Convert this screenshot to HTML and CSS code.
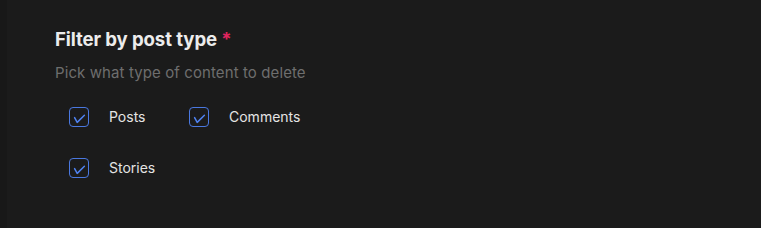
FILE: index.html
```html
<!DOCTYPE html>
<html>
<head>
<meta charset="utf-8">
<link rel="stylesheet" href="styles.css">
</head>
<body>
<div class="page">
  <div class="side"></div>
  <main class="main">
    <fieldset class="group">
      <h2 class="title">Filter by post type <span class="req">*</span></h2>
      <p class="hint">Pick what type of content to delete</p>
      <div class="options">
        <label class="opt"><span class="box"><svg viewBox="0 0 17 17" width="17" height="17"><path d="M3.6 8.6 L6.2 13.4 L13.4 6.3" fill="none" stroke="#4f82f0" stroke-width="1.5" stroke-linecap="round" stroke-linejoin="round"/></svg></span><span class="lbl">Posts</span></label>
        <label class="opt"><span class="box"><svg viewBox="0 0 17 17" width="17" height="17"><path d="M3.6 8.6 L6.2 13.4 L13.4 6.3" fill="none" stroke="#4f82f0" stroke-width="1.5" stroke-linecap="round" stroke-linejoin="round"/></svg></span><span class="lbl">Comments</span></label>
        <label class="opt"><span class="box"><svg viewBox="0 0 17 17" width="17" height="17"><path d="M3.6 8.6 L6.2 13.4 L13.4 6.3" fill="none" stroke="#4f82f0" stroke-width="1.5" stroke-linecap="round" stroke-linejoin="round"/></svg></span><span class="lbl">Stories</span></label>
      </div>
    </fieldset>
  </main>
</div>
</body>
</html>
```

FILE: styles.css
```css
html, body {
  margin: 0;
  padding: 0;
  background: #1b1b1b;
}
body {
  font-family: Inter, "Noto Sans", sans-serif;
  width: 761px;
  height: 228px;
  overflow: hidden;
}
.page {
  display: flex;
  height: 228px;
}
.side {
  width: 7px;
  background: #181818;
  flex: none;
}
.main {
  flex: 1;
  background: #1b1b1b;
  padding: 26px 0 0 48px;
}
.group {
  border: 0;
  margin: 0;
  padding: 0;
}
.title {
  margin: 0;
  font-size: 18.6px;
  font-weight: 700;
  line-height: 26px;
  color: #ececec;
  letter-spacing: -0.1px;
}
.req {
  color: #e0245e;
}
.hint {
  margin: 11px 0 0;
  font-size: 15px;
  line-height: 20px;
  color: #6e6e6e;
  letter-spacing: 0.1px;
}
.options {
  display: grid;
  grid-template-columns: 120px auto;
  justify-content: start;
  row-gap: 31px;
  margin: 24px 0 0 14px;
}
.opt {
  display: flex;
  align-items: center;
  gap: 20px;
  height: 20px;
}
.box {
  width: 20px;
  height: 20px;
  box-sizing: border-box;
  border: 1.5px solid #4a78e0;
  border-radius: 4px;
  display: flex;
  align-items: center;
  justify-content: center;
  flex: none;
}
.box svg {
  width: 17px;
  height: 17px;
  display: block;
}
.lbl {
  font-size: 14px;
  color: #e4e4e4;
  line-height: 20px;
}
```
